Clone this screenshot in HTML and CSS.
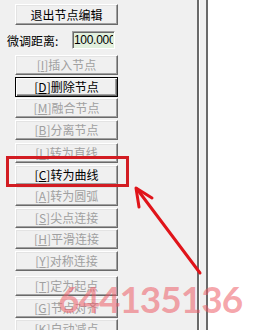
FILE: index.html
```
<!DOCTYPE html>
<html lang="zh">
<head>
    <meta charset="UTF-8">
    <title>节点编辑</title>
    <link rel="stylesheet" href="styles.css">
</head>
<body>
    <div class="window">
        <div class="panel">
            <button class="btn first">退出节点编辑</button>
            <div class="row">
                <label for="step">微调距离:</label>
                <input type="text" id="step" value="100.000">
            </div>
            <button class="btn off top-gap">[<u>I</u>]插入节点</button>
            <button class="btn default">[<u>D</u>]删除节点</button>
            <button class="btn off">[<u>M</u>]融合节点</button>
            <button class="btn off">[<u>B</u>]分离节点</button>
            <button class="btn off sep">[<u>L</u>]转为直线</button>
            <button class="btn">[<u>C</u>]转为曲线</button>
            <button class="btn off">[<u>A</u>]转为圆弧</button>
            <button class="btn off">[<u>S</u>]尖点连接</button>
            <button class="btn off">[<u>H</u>]平滑连接</button>
            <button class="btn off">[<u>Y</u>]对称连接</button>
            <button class="btn off sep2">[<u>T</u>]定为起点</button>
            <button class="btn off">[<u>G</u>]节点对齐</button>
            <button class="btn off">[<u>K</u>]自动减点</button>
        </div>
        <div class="splitter"></div>
        <div class="canvas"></div>
    </div>

    <div class="mark-box"></div>
    <svg class="arrow" width="262" height="330" viewBox="0 0 262 330">
        <path d="M200 273 L137 189" stroke="#e0141a" stroke-width="3" fill="none" stroke-linecap="round"/>
        <path d="M152 198 L136 188 L139 207" stroke="#e0141a" stroke-width="3" fill="none" stroke-linecap="round" stroke-linejoin="round"/>
    </svg>
    <div class="watermark">644135136</div>
</body>
</html>
```

FILE: styles.css
```
body { margin: 0; width: 262px; height: 330px; overflow: hidden; position: relative; font-family: "Noto Sans CJK SC", sans-serif; }
.window { display: flex; height: 330px; }
.panel { width: 197px; background: #f0f0f0; padding: 4px 0 0 15px; box-sizing: border-box; }
.splitter { width: 11px; background: #f0f0f0; border-left: 2px solid #6a6a6a; border-right: 2px solid #6a6a6a; box-sizing: border-box; box-shadow: inset 1px 0 #fff; }
.canvas { flex: 1; background: #fff; }

.btn {
    display: block; width: 103px; height: 20px; margin-top: 1.5px; padding: 0;
    box-sizing: border-box; background: #f0f0f0;
    border: 1px solid; border-color: #fff #696969 #696969 #fff;
    box-shadow: inset -1px -1px #a0a0a0, inset 1px 1px #e3e3e3;
    font: 12px/16px "Noto Sans CJK SC", sans-serif; color: #000;
}
.btn u { text-decoration: underline; }
.btn.off { color: #a0a0a0; }
.btn.first { height: 21px; margin-top: 0; }
.btn.default { border-color: #000; box-shadow: inset 1px 1px #fff, inset -1px -1px #696969, inset -2px -2px #a0a0a0; }
.btn.top-gap { margin-top: 6px; }
.btn.sep { margin-top: 3.5px; }
.btn.sep2 { margin-top: 5.5px; }

.row { display: flex; align-items: center; height: 18px; margin: 6px 0 0 -8px; font-size: 12px; }
.row label { width: 65px; }
.row input {
    width: 43px; height: 18px; box-sizing: border-box; padding: 0 1px;
    border: 1px solid; border-color: #a0a0a0 #fff #fff #a0a0a0;
    box-shadow: inset 1px 1px #696969;
    background: #e2f0de; font: 12px "Liberation Sans", sans-serif; letter-spacing: -0.3px;
}

.mark-box { position: absolute; left: 6px; top: 156px; width: 123px; height: 31px; box-sizing: border-box; border: 3px solid #d21c22; }
.arrow { position: absolute; left: 0; top: 0; }
.watermark {
    position: absolute; left: 58px; top: 276px;
    font: bold 37px "Lato", sans-serif; letter-spacing: -1px;
    color: rgba(238, 90, 100, 0.55);
}
```
